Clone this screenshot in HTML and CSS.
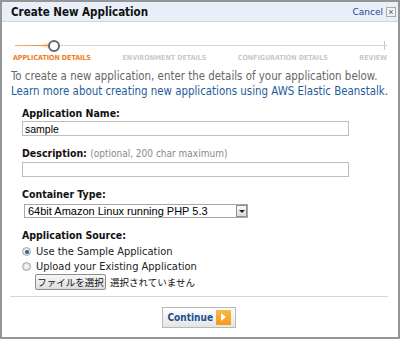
FILE: index.html
```html
<!DOCTYPE html>
<html lang="en">
<head>
    <meta charset="UTF-8">
    <title>Create New Application</title>
    <link rel="stylesheet" href="styles.css">
</head>
<body>
    <div class="dialog">
        <div class="header">
            <h1 class="title">Create New Application</h1>
            <a href="#" class="cancel">Cancel</a>
            <span class="close">&times;</span>
        </div>
        <div class="steps">
            <div class="track">
                <div class="done"></div>
                <div class="dot"></div>
                <div class="tick"></div>
            </div>
            <div class="labels">
                <span class="step active">Application Details</span>
                <span class="step">Environment Details</span>
                <span class="step">Configuration Details</span>
                <span class="step">Review</span>
            </div>
        </div>
        <p class="intro">
            To create a new application, enter the details of your application below.<br>
            <a href="#">Learn more about creating new applications using AWS Elastic Beanstalk.</a>
        </p>
        <div class="form">
            <div class="field">
                <label class="label">Application Name:</label>
                <input type="text" class="text" value="sample">
            </div>
            <div class="field">
                <label class="label">Description: <span class="hint">(optional, 200 char maximum)</span></label>
                <input type="text" class="text">
            </div>
            <div class="field">
                <label class="label">Container Type:</label>
                <div class="select">
                    <span>64bit Amazon Linux running PHP 5.3</span>
                    <span class="arrow"></span>
                </div>
            </div>
            <div class="field">
                <label class="label">Application Source:</label>
                <div class="radio first"><span class="dot-radio checked"></span>Use the Sample Application</div>
                <div class="radio"><span class="dot-radio"></span>Upload your Existing Application</div>
                <div class="file">
                    <span class="file-btn">ファイルを選択</span>
                    <span class="file-none">選択されていません</span>
                </div>
            </div>
        </div>
        <div class="footer">
            <button class="continue">Continue <span class="play"></span></button>
        </div>
    </div>
</body>
</html>
```

FILE: styles.css
```css
* {
    margin: 0;
    padding: 0;
    box-sizing: border-box;
}

body {
    background: #fff;
    font-family: "DejaVu Sans Condensed", "DejaVu Sans", sans-serif;
    font-size: 10.5px;
    color: #333;
}

.dialog {
    width: 400px;
    height: 339px;
    border: 2px solid #959595;
    display: flex;
    flex-direction: column;
}

.header {
    flex-shrink: 0;
    height: 20px;
    background: #e8eff9;
    border-bottom: 1px solid #c9d6e6;
    display: flex;
    align-items: center;
    padding: 0 2px 0 9px;
}

.title {
    flex: 1;
    font-size: 11.5px;
    font-weight: bold;
    color: #111;
}

.cancel {
    color: #2b3f8f;
    text-decoration: none;
    font-family: "DejaVu Sans", sans-serif;
    font-size: 9px;
    margin-right: 3px;
}

.close {
    width: 10px;
    height: 10px;
    border: 1px solid #a9a9a9;
    background: #f2f2f2;
    color: #555;
    font-size: 9px;
    line-height: 8px;
    text-align: center;
    font-family: "Liberation Sans", sans-serif;
}

.steps {
    flex-shrink: 0;
    padding: 18px 11px 0 11px;
}

.track {
    position: relative;
    height: 12px;
}

.track::before {
    content: "";
    position: absolute;
    left: 2px;
    right: 0;
    top: 5px;
    height: 1px;
    background: #d6d6d6;
}

.done {
    position: absolute;
    left: 2px;
    top: 5px;
    width: 34px;
    height: 1px;
    background: linear-gradient(to right, #f6b070, #f08a24);
}

.done::after {
    content: "";
    position: absolute;
    right: -2px;
    top: -3px;
    width: 12px;
    height: 7px;
    background: radial-gradient(ellipse at right, rgba(244, 150, 60, 0.7), rgba(244, 150, 60, 0) 70%);
}

.dot {
    position: absolute;
    left: 35px;
    top: 0;
    width: 12px;
    height: 12px;
    border: 2px solid #666;
    border-radius: 50%;
    background: #fff;
}

.tick {
    position: absolute;
    right: 2px;
    top: 1px;
    width: 1px;
    height: 9px;
    background: #c8c8c8;
}

.labels {
    display: flex;
    justify-content: space-between;
    margin-top: 1px;
    line-height: 10px;
}

.step {
    font-size: 7px;
    font-weight: bold;
    text-transform: uppercase;
    color: #c9c9c9;
}

.step.active {
    color: #ef7e1a;
}

.intro {
    flex-shrink: 0;
    padding: 6px 9px 0 9px;
    font-size: 11.4px;
    line-height: 15px;
    color: #666;
}

.intro a {
    color: #1f5d9a;
    text-decoration: none;
}

.form {
    flex: 1;
    padding: 7px 0 0 20px;
}

.field {
    margin-bottom: 10px;
}

.field:last-child {
    margin-bottom: 0;
}

.label {
    display: block;
    font-weight: bold;
    color: #111;
    line-height: 14px;
    margin-bottom: 1px;
}

.hint {
    font-weight: normal;
    font-size: 10px;
    color: #888;
}

.text {
    display: block;
    width: 327px;
    height: 15px;
    border: 1px solid #bdbdbd;
    font-family: "Liberation Sans", Arial, sans-serif;
    font-size: 10.5px;
    padding: 0 2px;
    color: #000;
}

.select {
    display: flex;
    align-items: center;
    justify-content: space-between;
    width: 224px;
    height: 14px;
    margin: 3px 0 0 2px;
    border: 1px solid #a8a8a8;
    font-family: "Liberation Sans", Arial, sans-serif;
    font-size: 11px;
    color: #000;
    padding-left: 3px;
}

.arrow {
    width: 11px;
    height: 12px;
    border: 1px solid #8e8e8e;
    background: linear-gradient(#fafafa, #dcdcdc);
    position: relative;
}

.arrow::after {
    content: "";
    position: absolute;
    left: 2px;
    top: 4px;
    border-left: 3px solid transparent;
    border-right: 3px solid transparent;
    border-top: 3px solid #222;
}

.radio {
    display: flex;
    align-items: center;
    height: 15px;
    font-size: 11px;
    color: #222;
}

.radio.first {
    margin-top: 2px;
}

.dot-radio {
    width: 9px;
    height: 9px;
    border-radius: 50%;
    border: 1px solid #a5a5a5;
    background: radial-gradient(#fafafa, #d4d4d4);
    margin-right: 5px;
    position: relative;
}

.dot-radio.checked::after {
    content: "";
    position: absolute;
    left: 1.5px;
    top: 1.5px;
    width: 4px;
    height: 4px;
    border-radius: 50%;
    background: #2a5f9a;
}

.file {
    display: flex;
    align-items: center;
    padding-left: 13px;
    font-family: "Noto Sans CJK JP", sans-serif;
    font-size: 9.5px;
    color: #111;
}

.file-btn {
    height: 16px;
    line-height: 14px;
    width: 71px;
    text-align: center;
    border: 1px solid #8f8f8f;
    border-radius: 2px;
    background: linear-gradient(#f6f6f6, #dedede);
    margin-right: 4px;
}

.footer {
    flex-shrink: 0;
    margin: 0 10px 0 8px;
    border-top: 1px solid #d6d6d6;
    height: 41px;
    display: flex;
    justify-content: center;
    padding-top: 10px;
}

.continue {
    height: 21px;
    width: 74px;
    border: 1px solid #b9b9b9;
    background: linear-gradient(#ffffff, #e4e4e4);
    font-family: "DejaVu Sans Condensed", sans-serif;
    font-weight: bold;
    font-size: 10px;
    color: #1d4f91;
    display: flex;
    align-items: center;
    justify-content: flex-end;
    padding-right: 4px;
    gap: 3px;
}

.play {
    width: 15px;
    height: 15px;
    background: linear-gradient(#fbb84a, #f39a1c);
    position: relative;
}

.play::after {
    content: "";
    position: absolute;
    left: 5px;
    top: 3px;
    border-top: 4.5px solid transparent;
    border-bottom: 4.5px solid transparent;
    border-left: 5px solid #fff;
}
```
